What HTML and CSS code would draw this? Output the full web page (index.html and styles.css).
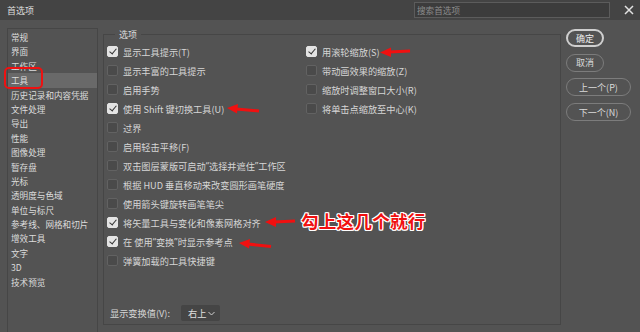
FILE: index.html
```html
<!DOCTYPE html>
<html lang="zh-CN">
<head>
    <meta charset="UTF-8">
    <meta name="viewport" content="width=device-width, initial-scale=1.0">
    <title>首选项</title>
    <link rel="stylesheet" href="styles.css">
</head>
<body>
    <div class="window">
        <div class="titlebar">
            <span class="title">首选项</span>
            <input class="search" type="text" placeholder="搜索首选项">
            <svg class="close" width="10" height="10" viewBox="0 0 10 10">
                <path d="M1 1 L9 9 M9 1 L1 9" stroke="#e2e2e2" stroke-width="1.5" fill="none"/>
            </svg>
        </div>

        <div class="content">
            <ul class="nav">
                <li>常规</li>
                <li>界面</li>
                <li>工作区</li>
                <li class="active">工具</li>
                <li>历史记录和内容凭据</li>
                <li>文件处理</li>
                <li>导出</li>
                <li>性能</li>
                <li>图像处理</li>
                <li>暂存盘</li>
                <li>光标</li>
                <li>透明度与色域</li>
                <li>单位与标尺</li>
                <li>参考线、网格和切片</li>
                <li>增效工具</li>
                <li>文字</li>
                <li>3D</li>
                <li>技术预览</li>
            </ul>

            <div class="options">
                <span class="legend">选项</span>
                <div class="grid">
                    <div class="col left">
                        <div class="check on"><span class="box"></span>显示工具提示(T)</div>
                        <div class="check"><span class="box"></span>显示丰富的工具提示</div>
                        <div class="check"><span class="box"></span>启用手势</div>
                        <div class="check on"><span class="box"></span>使用 Shift 键切换工具(U)</div>
                        <div class="check"><span class="box"></span>过界</div>
                        <div class="check"><span class="box"></span>启用轻击平移(F)</div>
                        <div class="check"><span class="box"></span>双击图层蒙版可启动<span class="q">“</span>选择并遮住<span class="q">”</span>工作区</div>
                        <div class="check"><span class="box"></span>根据 HUD 垂直移动来改变圆形画笔硬度</div>
                        <div class="check"><span class="box"></span>使用箭头键旋转画笔笔尖</div>
                        <div class="check on"><span class="box"></span>将矢量工具与变化和像素网格对齐</div>
                        <div class="check on"><span class="box"></span>在 使用<span class="q">“</span>变换<span class="q">”</span>时显示参考点</div>
                        <div class="check"><span class="box"></span>弹簧加载的工具快捷键</div>
                    </div>
                    <div class="col">
                        <div class="check on"><span class="box"></span>用滚轮缩放(S)</div>
                        <div class="check"><span class="box"></span>带动画效果的缩放(Z)</div>
                        <div class="check"><span class="box"></span>缩放时调整窗口大小(R)</div>
                        <div class="check"><span class="box"></span>将单击点缩放至中心(K)</div>
                    </div>
                </div>
                <div class="bottom">
                    <span>显示变换值(V):</span>
                    <div class="select">右上
                        <svg width="7" height="5" viewBox="0 0 7 5"><path d="M0.5 1 L3.5 4 L6.5 1" stroke="#cfcfcf" fill="none"/></svg>
                    </div>
                </div>
            </div>

            <div class="buttons">
                <button class="btn primary">确定</button>
                <button class="btn">取消</button>
                <button class="btn wide">上一个(P)</button>
                <button class="btn wide">下一个(N)</button>
            </div>
        </div>

        <!-- 标注 -->
        <div class="mark-box"></div>
        <svg class="arrows" width="640" height="332" viewBox="0 0 640 332">
            <g stroke="#f01010" stroke-width="3" fill="#f01010">
                <line x1="389" y1="52" x2="410" y2="51"/>
                <line x1="236" y1="109" x2="259" y2="111"/>
                <line x1="274" y1="222" x2="295" y2="221"/>
                <line x1="248" y1="244" x2="271" y2="246.5"/>
            </g>
            <g fill="#f01010">
                <polygon points="380,52.5 391,47.5 391,57"/>
                <polygon points="227,108 238,104 237,113.5"/>
                <polygon points="265,222 276,217 276,227"/>
                <polygon points="239,243 250,239 249,248.5"/>
            </g>
        </svg>
        <div class="note">勾上这几个就行</div>
    </div>
</body>
</html>
```

FILE: styles.css
```css
* {
    box-sizing: border-box;
}

body {
    margin: 0;
    background-color: #535353;
    font-family: "Noto Sans CJK SC", "Noto Sans", sans-serif;
    color: #d6d6d6;
    overflow: hidden;
}

.window {
    position: relative;
    width: 640px;
    height: 332px;
    overflow: hidden;
}

.titlebar {
    height: 20px;
    background-color: #444444;
    display: flex;
    align-items: center;
}

.title {
    padding-left: 7px;
    font-size: 9px;
    color: #dedede;
}

.search {
    margin-left: auto;
    width: 196px;
    height: 16px;
    padding: 0 2px;
    background-color: #3c3c3c;
    border: 1px solid #5c5c5c;
    font-family: inherit;
    font-size: 8.6px;
    color: #d6d6d6;
    outline: none;
}

.search::placeholder {
    color: #8d8d8d;
}

.close {
    margin: 0 6px 0 14px;
}

.content {
    display: flex;
    align-items: flex-start;
    padding: 8px 0 0 7px;
}

.nav {
    list-style: none;
    margin: 0;
    padding: 1px 0 0;
    width: 91px;
    height: 320px;
    border: 1px solid #464646;
}

.nav li {
    height: 14.4px;
    line-height: 14.4px;
    padding-left: 3px;
    font-size: 8.6px;
    color: #dcdcdc;
    white-space: nowrap;
}

.nav li.active {
    background-color: #696969;
}

.options {
    margin: 6px 0 0 5px;
    width: 458px;
    height: 291px;
    border: 1px solid #464646;
    display: flex;
    flex-direction: column;
}

.legend {
    align-self: flex-start;
    margin: -6px 0 0 11px;
    padding: 0 4px;
    height: 12px;
    line-height: 12px;
    font-size: 9px;
    background-color: #535353;
    color: #dcdcdc;
}

.grid {
    display: flex;
    margin-top: 1px;
    padding-left: 3px;
}

.col.left {
    width: 199px;
}

.check {
    height: 19px;
    display: flex;
    align-items: center;
    font-size: 9.2px;
    white-space: pre;
    color: #d6d6d6;
}

.q {
    font-family: "Noto Sans", sans-serif;
}

.box {
    width: 11px;
    height: 11px;
    margin-right: 5px;
    border: 1px solid #626262;
    border-radius: 2px;
    background-color: #4a4a4a;
    flex-shrink: 0;
    position: relative;
}

.check.on .box {
    background-color: #e4e4e4;
    border-color: #e4e4e4;
}

.check.on .box::after {
    content: "";
    position: absolute;
    left: 3px;
    top: 0px;
    width: 3px;
    height: 6px;
    border: solid #333333;
    border-width: 0 1.6px 1.6px 0;
    transform: rotate(40deg);
}

.bottom {
    margin-top: auto;
    margin-bottom: 3px;
    padding-left: 6px;
    display: flex;
    align-items: center;
    font-size: 9.2px;
}

.select {
    margin-left: 11px;
    width: 39px;
    height: 16px;
    display: flex;
    align-items: center;
    justify-content: space-between;
    padding: 0 5px 0 7px;
    background-color: #454545;
    border-radius: 2px;
    font-size: 9.2px;
    color: #e0e0e0;
}

.buttons {
    display: flex;
    flex-direction: column;
    align-items: flex-start;
    gap: 6.7px;
    margin: 1px 0 0 5px;
}

.btn {
    width: 38px;
    height: 18px;
    padding: 0;
    border: 1px solid #7c7c7c;
    border-radius: 9px;
    background-color: #535353;
    font-family: inherit;
    font-size: 9px;
    color: #dadada;
}

.btn.primary {
    border: 2px solid #cfcfcf;
    color: #ececec;
}

.btn.wide {
    width: 65px;
}

.mark-box {
    position: absolute;
    left: 4px;
    top: 67px;
    width: 39px;
    height: 22px;
    border: 2.5px solid #ee1111;
    border-radius: 5px;
}

.arrows {
    position: absolute;
    left: 0;
    top: 0;
}

.note {
    position: absolute;
    left: 301px;
    top: 208px;
    font-size: 17.5px;
    font-weight: bold;
    color: #f01010;
    letter-spacing: 0.3px;
    text-shadow: 1px 0 #fff, -1px 0 #fff, 0 1px #fff, 0 -1px #fff,
                 1px 1px #fff, -1px -1px #fff, 1px -1px #fff, -1px 1px #fff;
}
```
